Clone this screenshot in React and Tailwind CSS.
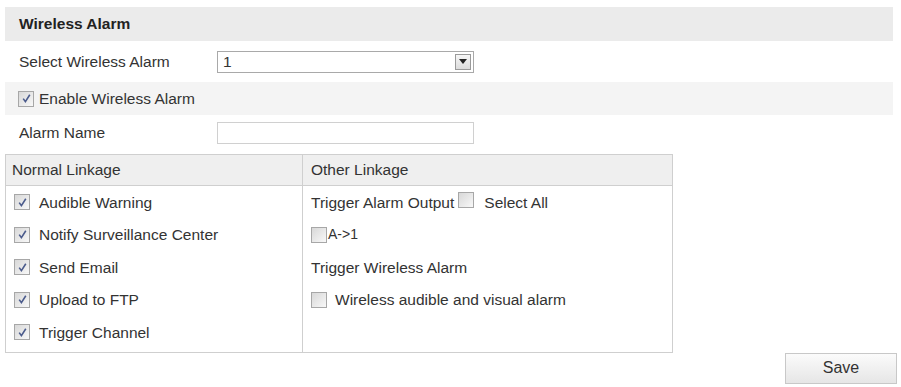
import React from "react";

function Box({ checked }) {
  return (
    <span className="inline-flex h-[16px] w-[16px] shrink-0 items-center justify-center border border-[#a7a7a7] bg-gradient-to-br from-[#d8d8d8] to-[#f8f8f8]">
      {checked && (
        <svg width="11" height="11" viewBox="0 0 11 11">
          <path d="M2.2 5.6 L4.4 8.6 L8.8 1.8" fill="none" stroke="#4b5b8c" strokeWidth="1.6" />
        </svg>
      )}
    </span>
  );
}

export default function App() {
  const normal = [
    "Audible Warning",
    "Notify Surveillance Center",
    "Send Email",
    "Upload to FTP",
    "Trigger Channel",
  ];
  return (
    <div className="h-[387px] w-[901px] bg-white text-[15.5px] text-[#333] font-['Liberation_Sans',Arial,sans-serif]">
      <div className="pl-[5px] pt-[7px] w-[893px]">
        <div className="flex h-[34px] items-center bg-[#ebebeb] pl-[14px] font-bold text-[#222]">
          Wireless Alarm
        </div>
        <div className="flex h-[41px] items-center pl-[14px]">
          <span className="w-[198px]">Select Wireless Alarm</span>
          <div className="flex h-[22px] w-[257px] items-center justify-between border border-[#a9a9a9] bg-white pl-[5px] pr-[2px]">
            <span>1</span>
            <span className="flex h-[16px] w-[16px] items-center justify-center border border-[#9a9a9a] bg-gradient-to-b from-[#f6f6f6] to-[#dcdcdc]">
              <svg width="8" height="5" viewBox="0 0 8 5">
                <path d="M0 0 H8 L4 5 Z" fill="#222" />
              </svg>
            </span>
          </div>
        </div>
        <div className="flex h-[33px] items-center gap-[5px] bg-[#f4f4f4] pl-[13px]">
          <Box checked />
          <span>Enable Wireless Alarm</span>
        </div>
        <div className="flex h-[35px] items-center pl-[14px]">
          <span className="w-[198px]">Alarm Name</span>
          <div className="h-[22px] w-[257px] border border-[#d0d0d0] bg-white" />
        </div>
        <div className="mt-[4px] flex w-[668px] border border-[#cfcfcf]">
          <div className="w-[297px] border-r border-[#cfcfcf]">
            <div className="flex h-[31px] items-center border-b border-[#cfcfcf] bg-[#efefef] pl-[6px]">
              Normal Linkage
            </div>
            <div className="pb-[3px]">
              {normal.map((t) => (
                <div key={t} className="flex h-[32.5px] items-center gap-[9px] pl-[8px]">
                  <Box checked />
                  <span>{t}</span>
                </div>
              ))}
            </div>
          </div>
          <div className="flex-1">
            <div className="flex h-[31px] items-center border-b border-[#cfcfcf] bg-[#efefef] pl-[8px]">
              Other Linkage
            </div>
            <div className="flex h-[32.5px] items-center pl-[8px]">
              <span>Trigger Alarm Output</span>
              <span className="ml-[4px]"><Box /></span>
              <span className="ml-[10px]">Select All</span>
            </div>
            <div className="flex h-[32.5px] items-center pl-[8px]">
              <Box />
              <span className="ml-[1px] text-[14px]">A-&gt;1</span>
            </div>
            <div className="flex h-[32.5px] items-center pl-[8px]">
              Trigger Wireless Alarm
            </div>
            <div className="flex h-[32.5px] items-center gap-[8px] pl-[8px]">
              <Box />
              <span>Wireless audible and visual alarm</span>
            </div>
          </div>
        </div>
        <div className="flex justify-end">
          <button className="mr-[-4px] h-[31px] w-[112px] border border-[#c8c8c8] bg-gradient-to-b from-[#fbfbfb] to-[#e6e6e6] text-[16px] text-[#333]">
            Save
          </button>
        </div>
      </div>
    </div>
  );
}
